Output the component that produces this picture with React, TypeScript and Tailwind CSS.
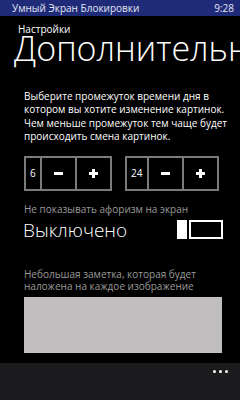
import React from "react";

function Stepper({ value, numW }: { value: string; numW: string }) {
  return (
    <div className="flex h-[35px] border-2 border-[#7b7b7b]">
      <div className={`${numW} flex items-center pl-[4px] text-[10px] text-white border-r-2 border-[#7b7b7b]`}>{value}</div>
      <div className="w-[35px] flex items-center justify-center border-r-2 border-[#7b7b7b]">
        <div className="w-[9px] h-[3px] bg-white" />
      </div>
      <div className="w-[33px] flex items-center justify-center">
        <div className="relative w-[9px] h-[9px]">
          <div className="absolute left-0 top-[3px] w-[9px] h-[3px] bg-white" />
          <div className="absolute top-0 left-[3px] w-[3px] h-[9px] bg-white" />
        </div>
      </div>
    </div>
  );
}

export default function App() {
  return (
    <div
      className="w-[240px] h-[400px] bg-black flex flex-col overflow-hidden text-white"
      style={{ fontFamily: '"Open Sans", "Noto Sans", sans-serif' }}
    >
      <div className="h-[16px] shrink-0 bg-[#1f2b78] flex items-center justify-between pl-[12px] pr-[6px] text-[10px] text-[#e3e6f2]">
        <span>Умный Экран Блокировки</span>
        <span>9:28</span>
      </div>
      <div className="h-[347px] shrink-0 flex flex-col">
        <div className="pl-[18px] pt-[8px] text-[10px] leading-[11px]">Настройки</div>
        <div className="pl-[14px] text-[34px] font-light leading-[26px] whitespace-nowrap overflow-visible">Дополнительные</div>
        <div className="pl-[24px] mt-[29px] text-[10px] leading-[13.4px] text-white">
          <div>Выберите промежуток времени дня в</div>
          <div>котором вы хотите изменение картинок.</div>
          <div>Чем меньше промежуток тем чаще будет</div>
          <div>происходить смена картинок.</div>
        </div>
        <div className="flex pl-[24px] mt-[12px] gap-[13px]">
          <Stepper value="6" numW="w-[16px]" />
          <Stepper value="24" numW="w-[22px]" />
        </div>
        <div className="pl-[24px] mt-[12px] text-[10px] leading-[13px] text-[#9a9a9a]">Не показывать афоризм на экран</div>
        <div className="flex items-center justify-between pl-[23px] pr-[17px] mt-[2px]">
          <div className="text-[19px] font-light leading-[24px]">Выключено</div>
          <div className="flex items-stretch h-[19px] gap-[2px]">
            <div className="w-[10px] bg-white" />
            <div className="w-[34px] border-2 border-white" />
          </div>
        </div>
        <div className="pl-[24px] mt-[26px] text-[10px] leading-[12.5px] text-[#9a9a9a]">
          <div>Небольшая заметка, которая будет</div>
          <div>наложена на каждое изображение</div>
        </div>
        <div className="ml-[24px] w-[198px] h-[56px] mt-[4px] bg-[#c0bebf]" />
      </div>
      <div className="flex-1 bg-[#1b1a1c] flex justify-end pr-[12px] pt-[7px]">
        <div className="flex gap-[3px] h-[3px]">
          <div className="w-[3px] h-[3px] rounded-full bg-white" />
          <div className="w-[3px] h-[3px] rounded-full bg-white" />
          <div className="w-[3px] h-[3px] rounded-full bg-white" />
        </div>
      </div>
    </div>
  );
}
